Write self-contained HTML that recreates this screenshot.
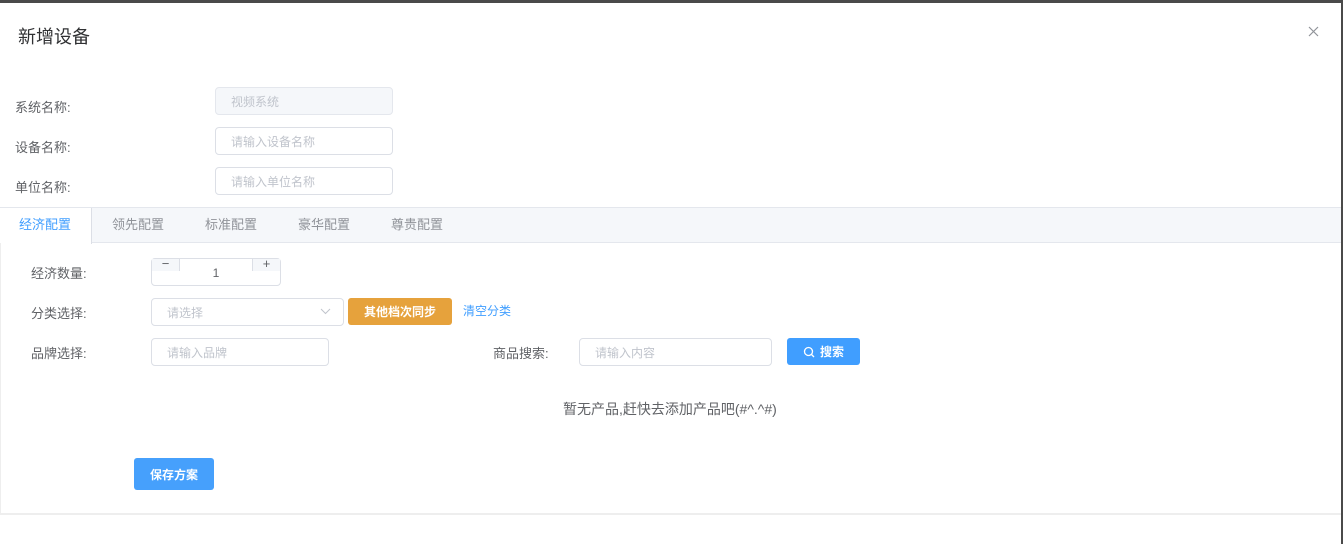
<!DOCTYPE html>
<html><head><meta charset="utf-8"><style>
*{box-sizing:border-box;margin:0;padding:0}
body{width:1343px;height:544px;background:#4a4a4a;font-family:"Liberation Sans","Noto Sans CJK SC",sans-serif;position:relative;overflow:hidden;color:#606266}
.dlg{position:absolute;left:0;top:3px;width:1341px;height:541px;background:#fff}
.abs{position:absolute}
.title{left:18px;top:20px;font-size:18px;color:#303133}
.lbl{font-size:13px;color:#606266}
.inp{border:1px solid #dcdfe6;border-radius:4px;font-size:12px;color:#c0c4cc;padding-left:15px;display:flex;align-items:center;background:#fff}
.tabs{left:0;top:204px;width:1341px;height:36px;background:#f5f7fa;border-top:1px solid #e4e7ed;border-bottom:1px solid #e4e7ed}
.tab{position:absolute;top:0;height:34px;line-height:34px;font-size:13px;color:#909399}
.btn{border-radius:3px;color:#fff;font-size:12px;display:flex;align-items:center;justify-content:center;font-weight:bold}
</style></head><body>
<div class="dlg">
<div class="abs title">新增设备</div>
<svg class="abs" style="left:1308px;top:23px" width="11" height="11"><path d="M1 1L10 10M10 1L1 10" stroke="#909399" stroke-width="1.2"/></svg>
<div class="abs lbl" style="left:15px;top:94px">系统名称:</div>
<div class="abs lbl" style="left:15px;top:134px">设备名称:</div>
<div class="abs lbl" style="left:15px;top:174px">单位名称:</div>
<div class="abs inp" style="left:215px;top:84px;width:178px;height:28px;background:#f5f7fa;border-color:#e4e7ed">视频系统</div>
<div class="abs inp" style="left:215px;top:124px;width:178px;height:28px">请输入设备名称</div>
<div class="abs inp" style="left:215px;top:164px;width:178px;height:28px">请输入单位名称</div>
<div class="abs tabs">
<div class="tab" style="left:0;width:92px;background:#fff;border-right:1px solid #dcdfe6;height:36px;color:#409eff;padding-left:19px">经济配置</div>
<div class="tab" style="left:112px">领先配置</div>
<div class="tab" style="left:205px">标准配置</div>
<div class="tab" style="left:298px">豪华配置</div>
<div class="tab" style="left:391px">尊贵配置</div>
</div>
<div class="abs" style="left:0;top:240px;width:1341px;height:272px;border-left:1px solid #eee;border-bottom:2px solid #eee"></div>
<div class="abs lbl" style="left:31px;top:260px">经济数量:</div>
<div class="abs" style="left:151px;top:255px;width:130px;height:28px;border:1px solid #dcdfe6;border-radius:4px">
<div class="abs" style="left:0;top:0;width:28px;height:12px;background:#f5f7fa;border-right:1px solid #dcdfe6;text-align:center;font-size:13px;line-height:10px;color:#606266">−</div>
<div class="abs" style="right:0;top:0;width:28px;height:12px;background:#f5f7fa;border-left:1px solid #dcdfe6;text-align:center;font-size:13px;line-height:10px;color:#606266">+</div>
<div class="abs" style="left:0;width:128px;top:7px;text-align:center;font-size:12px;color:#606266">1</div>
</div>
<div class="abs lbl" style="left:31px;top:300px">分类选择:</div>
<div class="abs inp" style="left:151px;top:295px;width:193px;height:28px">请选择</div>
<svg class="abs" style="left:320px;top:305px" width="11" height="7"><path d="M1 1L5.5 5.5L10 1" stroke="#c0c4cc" fill="none"/></svg>
<div class="abs btn" style="left:348px;top:295px;width:104px;height:27px;background:#e6a23c">其他档次同步</div>
<div class="abs" style="left:463px;top:299px;font-size:12px;color:#409eff">清空分类</div>
<div class="abs lbl" style="left:31px;top:340px">品牌选择:</div>
<div class="abs inp" style="left:151px;top:335px;width:178px;height:28px">请输入品牌</div>
<div class="abs lbl" style="left:493px;top:340px">商品搜索:</div>
<div class="abs inp" style="left:579px;top:335px;width:193px;height:28px">请输入内容</div>
<div class="abs btn" style="left:787px;top:335px;width:73px;height:27px;background:#409eff"><svg width="12" height="12" style="margin-right:5px"><circle cx="5.5" cy="5.5" r="4" stroke="#fff" stroke-width="1.3" fill="none"/><path d="M8.5 8.5L11 11" stroke="#fff" stroke-width="1.3"/></svg>搜索</div>
<div class="abs" style="left:563px;top:396px;font-size:14px;color:#606266">暂无产品,赶快去添加产品吧(#^.^#)</div>
<div class="abs btn" style="left:134px;top:455px;width:80px;height:32px;background:#46a0fc">保存方案</div>
</div>
</body></html>
